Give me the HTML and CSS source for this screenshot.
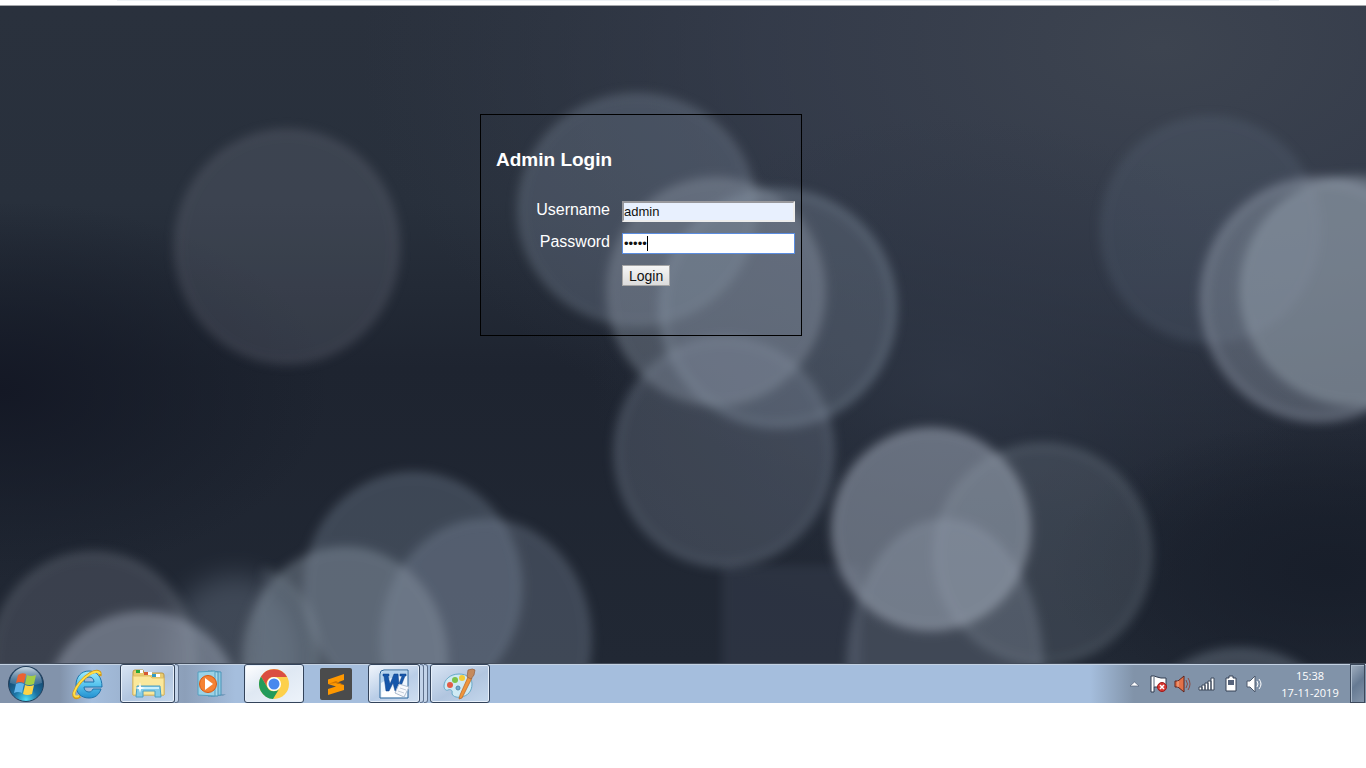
FILE: index.html
```html
<!DOCTYPE html>
<html lang="en">
<head>
<meta charset="utf-8">
<title>Admin Login</title>
<link rel="stylesheet" href="styles.css">
</head>
<body>
<div class="toolbar-edge"><div class="toolbar-line"></div></div>
<main class="wallpaper">
  <svg class="bokeh" viewBox="0 0 1366 658" preserveAspectRatio="none" aria-hidden="true">
    <defs>
      <linearGradient id="sky" x1="0" y1="0" x2="0" y2="1">
        <stop offset="0" stop-color="#2a313d"/><stop offset=".3" stop-color="#28303c"/><stop offset=".55" stop-color="#1e2430"/><stop offset="1" stop-color="#212834"/>
      </linearGradient>
      <radialGradient id="glow"><stop offset="0" stop-color="#3d4450"/><stop offset=".5" stop-color="#394050" stop-opacity=".65"/><stop offset="1" stop-color="#343b4a" stop-opacity="0"/></radialGradient>
      <radialGradient id="mid"><stop offset="0" stop-color="#2f3746" stop-opacity=".8"/><stop offset="1" stop-color="#2b3341" stop-opacity="0"/></radialGradient>
      <radialGradient id="dark"><stop offset="0" stop-color="#141825"/><stop offset="1" stop-color="#141a26" stop-opacity="0"/></radialGradient>
      <radialGradient id="shade"><stop offset="0" stop-color="#171d29" stop-opacity=".9"/><stop offset="1" stop-color="#141a26" stop-opacity="0"/></radialGradient>
      <filter id="soft" x="-20%" y="-20%" width="140%" height="140%" color-interpolation-filters="sRGB"><feGaussianBlur stdDeviation="5"/></filter>
      <filter id="softer" x="-50%" y="-50%" width="200%" height="200%" color-interpolation-filters="sRGB"><feGaussianBlur stdDeviation="14"/></filter>
    </defs>
    <rect width="1366" height="658" fill="url(#sky)"/>
    <ellipse cx="1160" cy="40" rx="800" ry="480" fill="url(#glow)"/>
    <ellipse cx="950" cy="370" rx="360" ry="260" fill="url(#mid)"/>
    <ellipse cx="0" cy="385" rx="330" ry="190" fill="url(#dark)"/>
    <ellipse cx="1330" cy="565" rx="280" ry="150" fill="url(#shade)"/>
    <rect x="722" y="560" width="140" height="110" fill="#313847" opacity=".7" filter="url(#soft)"/>
    <ellipse cx="235" cy="650" rx="68" ry="80" fill="#8795a8" opacity=".3" filter="url(#softer)"/>
    <g filter="url(#soft)" stroke-width="10">
      <ellipse cx="287" cy="241" rx="111" ry="116" fill="#8a90a0" fill-opacity=".20" stroke="#a4aab8" stroke-opacity=".07"/>
      <ellipse cx="637" cy="204" rx="118" ry="115" fill="#8998ab" fill-opacity=".28" stroke="#a4b1bf" stroke-opacity=".09"/>
      <ellipse cx="778" cy="303" rx="116" ry="117" fill="#8796aa" fill-opacity=".28" stroke="#a6b5c6" stroke-opacity=".19"/>
      <ellipse cx="716" cy="286" rx="108" ry="113" fill="#98a3b2" fill-opacity=".34" stroke="#a4b1bf" stroke-opacity=".10"/>
      <ellipse cx="724" cy="447" rx="108" ry="113" fill="#8892a5" fill-opacity=".27" stroke="#a4b1bf" stroke-opacity=".13"/>
      <ellipse cx="1043" cy="549" rx="107" ry="109" fill="#8892a2" fill-opacity=".23" stroke="#a4b1bf" stroke-opacity=".12"/>
      <ellipse cx="945" cy="665" rx="97" ry="150" fill="#929fb0" fill-opacity=".28" stroke="#a4b1bf" stroke-opacity=".08"/>
      <ellipse cx="931" cy="524" rx="98" ry="100" fill="#a5b0c0" fill-opacity=".50" stroke="#b8c2d0" stroke-opacity=".16"/>
      <ellipse cx="1210" cy="224" rx="108" ry="112" fill="#6a7c8f" fill-opacity=".19" stroke="#8799aa" stroke-opacity=".06"/>
      <ellipse cx="1319" cy="294" rx="116" ry="120" fill="#929fae" fill-opacity=".38" stroke="#aab5c4" stroke-opacity=".24"/>
      <ellipse cx="1356" cy="285" rx="115" ry="114" fill="#a1acba" fill-opacity=".40" stroke="#b0bac8" stroke-opacity=".09"/>
      <ellipse cx="413" cy="583" rx="108" ry="115" fill="#8594a8" fill-opacity=".30" stroke="#a4b1bf" stroke-opacity=".08"/>
      <ellipse cx="486" cy="635" rx="104" ry="120" fill="#8b98ab" fill-opacity=".29" stroke="#a4b1bf" stroke-opacity=".08"/>
      <ellipse cx="345" cy="655" rx="101" ry="112" fill="#929fae" fill-opacity=".37" stroke="#a4b1bf" stroke-opacity=".10"/>
      <path d="M262 567Q317 585 317 645V680H252Z" fill="#8795a8" fill-opacity=".15"/>
      <path d="M262 565Q315 585 315 650V680" fill="none" stroke="#a4b1bf" stroke-opacity=".12"/>
      <ellipse cx="93" cy="654" rx="101" ry="106" fill="#868d9c" fill-opacity=".26" stroke="#a4b1bf" stroke-opacity=".10"/>
      <ellipse cx="143" cy="696" rx="94" ry="88" fill="#9da8b8" fill-opacity=".48" stroke="#b0bac8" stroke-opacity=".13"/>
      <ellipse cx="1240" cy="715" rx="90" ry="70" fill="#8490a0" fill-opacity=".32" stroke="#a4b1bf" stroke-opacity=".13"/>
    </g>
  </svg>
  <form class="login">
    <h1 class="login-title">Admin Login</h1>
    <div class="fields">
      <label class="label" for="user">Username</label>
      <input class="field field-filled" id="user" type="text" value="admin">
      <label class="label" for="pass">Password</label>
      <div class="pass-wrap">
        <input class="field field-active" id="pass" type="password" value="admin">
        <span class="caret"></span>
      </div>
      <button class="submit" type="button">Login</button>
    </div>
  </form>
</main>
<footer class="taskbar">
  <button class="task start" aria-label="Start">
    <svg width="38" height="38" viewBox="0 0 38 38">
      <defs>
        <radialGradient id="orb" cx=".5" cy=".95" r=".85"><stop offset="0" stop-color="#4fe0f8"/><stop offset=".4" stop-color="#1b73a4"/><stop offset="1" stop-color="#143a5e"/></radialGradient>
        <linearGradient id="shine" x1="0" y1="0" x2="0" y2="1"><stop offset="0" stop-color="#dce9f3" stop-opacity=".9"/><stop offset="1" stop-color="#7da0bd" stop-opacity=".25"/></linearGradient>
      </defs>
      <circle cx="19" cy="19" r="17.5" fill="url(#orb)" stroke="#25405c"/>
      <path d="M3 18A16 16 0 0 1 35 18Q19 24 3 18Z" fill="url(#shine)"/>
      <path d="M11 10q4-3 8-1l-2 9q-4-2-8 0z" fill="#ec6231"/>
      <path d="M20 10q4 2 9 0l-2 9q-5 2-9 0z" fill="#a3ce46"/>
      <path d="M9 19q4-2 8 0l-2 9q-4-2-8 0z" fill="#62b6ec"/>
      <path d="M18 20q4 2 9 0l-2 9q-5 2-9 0z" fill="#fdd448"/>
    </svg>
  </button>
  <button class="task ie" aria-label="Internet Explorer">
    <svg width="32" height="32" viewBox="0 0 32 32">
      <defs><linearGradient id="ieb" x1="0" y1="0" x2="0" y2="1"><stop offset="0" stop-color="#a2ecfc"/><stop offset=".5" stop-color="#58c4ee"/><stop offset="1" stop-color="#2390d0"/></linearGradient></defs>
      <path fill="url(#ieb)" stroke="#1d73ab" stroke-width="1" fill-rule="evenodd" d="M17 3C9 3 4 9 4 17s5 13 13 13c6 0 10-3 12-9h-8c-1 2-2 3-4 3-3 0-5-2-5-5h18C30 9 25 3 17 3zM12 14c0-3 2-5 5-5s5 2 5 5z"/>
      <path d="M28 8c1-5-3-6-9-3C12 9 4 18 2 25c-1 5 2 6 6 3" fill="none" stroke="#d69b14" stroke-width="3"/>
      <path d="M28 6c-1-3-5-3-10 0C11 10 5 17 2 25c0 4 2 4 5 3" fill="none" stroke="#ffdf4a" stroke-width="2"/>
    </svg>
  </button>
  <button class="task open explorer" aria-label="File Explorer">
    <svg width="34" height="32" viewBox="0 0 34 32">
      <path d="M2 4q0-2 2-2h8l1 3h18q2 0 2 2v20H2z" fill="#e9cc70" stroke="#bd9846"/>
      <path d="M5 2h5v3H5z" fill="#28a838"/><path d="M13 4h5v3h-5z" fill="#d65a32"/><path d="M21 6h5v3h-5z" fill="#339cc5"/>
      <path d="M9 2h3v3H9zM17 4h4v3h-4zM25 6h4v3h-4z" fill="#fff"/>
      <path d="M2 8h17l2 2h12v17H2z" fill="#fae89c" stroke="#dfbf66"/>
      <path d="M6 18h23l1 11h-6v-6H12v6H5z" fill="#83cbe7" stroke="#4b9fc4"/>
      <path d="M7 19h21v2H7z" fill="#c9f0fb"/><path d="M9 14l1 5 4 1-4 1-1 4-1-4-4-1 4-1z" fill="#fff"/>
    </svg>
  </button>
  <span class="stack"></span>
  <button class="task player" aria-label="Media Player">
    <svg width="30" height="28" viewBox="0 0 30 28">
      <path d="M20 24h9l-3 2H4z" fill="#5f8caf" opacity=".6"/>
      <path d="M14 1l10 1v23l-10 1z" fill="#8fcbe2" stroke="#4c95b8"/><path d="M11 1l10 1v24H11z" fill="#a9daea" stroke="#4c95b8"/>
      <path d="M1 2l17-1v25l-17-1z" fill="#9bd2e6" stroke="#559fc0"/>
      <circle cx="11" cy="14" r="8.500" fill="#f58233" stroke="#d95811"/><path d="M8 8l8 6-8 6z" fill="#fff"/>
    </svg>
  </button>
  <button class="task open chrome" aria-label="Chrome">
    <svg width="30" height="30" viewBox="0 0 30 30">
      <circle cx="15" cy="15" r="15" fill="#fdd04b"/>
      <path d="M2 7.500A15 15 0 0 1 28 8H15A7 7 0 0 0 8.500 18.500Z" fill="#da4e42"/>
      <path d="M2 7.500A15 15 0 0 0 14 30L21 18.500A7 7 0 0 1 8.500 18.500Z" fill="#229b5a"/>
      <circle cx="15" cy="15" r="7" fill="#fff"/><circle cx="15" cy="15" r="5.500" fill="#4988ee"/>
    </svg>
  </button>
  <button class="task sublime" aria-label="Sublime Text">
    <svg width="32" height="32" viewBox="0 0 32 32">
      <rect width="32" height="32" rx="2" fill="#4a4b4c"/>
      <path d="M8 11.500L24 6v6l-8 3 8 2v5L8 27v-6l8-2.500L8 16z" fill="#ff9800"/><path d="M8 16l8-3 8 4-8-2z" fill="#d37700"/>
    </svg>
  </button>
  <button class="task open word" aria-label="Word">
    <svg width="30" height="30" viewBox="0 0 30 30">
      <path d="M5 1h24v28H1V5q0-4 4-4z" fill="#eef6fd" stroke="#276299"/>
      <path d="M5 2h23v5Q14 6 2 14V5q0-3 3-3z" fill="#b5d3ee"/>
      <path d="M3 23l16-6 11 2-6 9H3z" fill="#fff"/>
      <path d="M4 5h6v2H9l2 8 4-10h4l1 10 3-8h-2V5h6v2h-1l-6 15h-4l-2-8-4 8H7L5 7H4z" fill="#1657aa" stroke="#0e3f86" stroke-width=".5"/>
      <path d="M20 15l10 3-5 10-9-4z" fill="#f7f9fc" stroke="#aebcce"/><path d="M21 19l6 2M19 22l6 2" stroke="#c3ccd8"/>
    </svg>
  </button>
  <span class="stack"></span><span class="stack"></span>
  <button class="task open paint" aria-label="Paint">
    <svg width="34" height="32" viewBox="0 0 34 32">
      <path d="M16 6C7 6 1 12 1 18c0 3 2 5 4 4s5 0 4 3c0 3 4 5 9 4 7-1 11-6 11-13 0-6-5-10-13-10z" fill="#cfeaf4" stroke="#67a9c7"/>
      <circle cx="7" cy="17" r="3" fill="#e25b45"/><circle cx="12" cy="12" r="3" fill="#7cc24a"/><circle cx="19" cy="10" r="3" fill="#f4cd38"/><circle cx="15" cy="20" r="2" fill="#6fa9ce" stroke="#4d89ad"/>
      <path d="M25 9l4 1-10 20-3 1 1-4z" fill="#ef963d" stroke="#b76422" stroke-width=".7"/><path d="M25 2q5-2 7 0l-1 5-3 4-4-2z" fill="#c58a5d" stroke="#936040" stroke-width=".7"/>
    </svg>
  </button>
  <div class="tray">
    <svg class="tray-arrow" width="9" height="18" viewBox="0 0 9 18"><path d="M0 11l4.500-4L9 11z" fill="#fff" stroke="#54627a" stroke-width=".7"/></svg>
    <svg width="18" height="18" viewBox="0 0 18 18"><path d="M1 1h3l3 1 4 1h5v9H4v5H1z" fill="#fff" stroke="#2f3b4e"/><path d="M4 2v10" stroke="#59667a"/><circle cx="12" cy="12" r="4.500" fill="#d83833" stroke="#9e1a1a"/><path d="M10 10l4 4m0-4l-4 4" stroke="#fff" stroke-width="1.500"/></svg>
    <svg width="18" height="18" viewBox="0 0 18 18"><path d="M1 6h3l6-5v16l-6-5H1z" fill="#e37147" stroke="#5e251f"/><path d="M4 6v6" stroke="#f3b49a"/><path d="M12 5q3 4 0 8M14 3q4 6 0 12" fill="none" stroke="#8c4a41"/></svg>
    <svg width="18" height="18" viewBox="0 0 18 18"><path d="M1 12h3v3H1zM4 10h3v5H4zM7 8h3v7H7zM10 6h3v9h-3zM13 3h3v12h-3z" fill="#fff" stroke="#3c485a"/></svg>
    <svg width="18" height="18" viewBox="0 0 18 18"><path d="M7 1h4v2h3v13H4V3h3z" fill="#fff" stroke="#344055"/><path d="M6 5h6v5H6z" fill="#56637a"/></svg>
    <svg width="18" height="18" viewBox="0 0 18 18"><path d="M1 6h3l5-5v16l-5-5H1z" fill="#fff" stroke="#4c596c"/><path d="M11 6q2 3 0 6M13 4q4 5 0 10" fill="none" stroke="#fff"/></svg>
  </div>
  <time class="clock" datetime="2019-11-17T15:38"><span>15:38</span><span>17-11-2019</span></time>
  <button class="show-desktop" aria-label="Show desktop"></button>
</footer>
</body>
</html>
```
FILE: styles.css
```css
* { box-sizing: border-box; }
body {
  margin: 0;
  background: #fff;
  font-family: "Liberation Sans", Arial, sans-serif;
}
.toolbar-edge {
  height: 6px;
  padding: 0 87px 0 117px;
  border-bottom: 1px solid #a5a7ab;
}
.toolbar-line { height: 1px; background: #edf1f5; }
.wallpaper {
  position: relative;
  padding: 108px 0 327px 480px;
  background: #262d39;
}
.bokeh {
  position: absolute;
  inset: 0;
  width: 100%;
  height: 100%;
}
.login {
  position: relative;
  width: 322px;
  padding: 34px 6px 49px 15px;
  border: 1px solid #000;
  color: #fff;
}
.login-title {
  margin: 0 0 30px;
  font-size: 19px;
  line-height: 22px;
}
.fields {
  display: grid;
  grid-template-columns: 114px 1fr;
  column-gap: 12px;
  row-gap: 11px;
}
.label {
  font-size: 16px;
  line-height: 18px;
  text-align: right;
}
.field {
  display: block;
  width: 100%;
  height: 21px;
  padding: 1px 0;
  border: 2px solid #ededed;
  border-color: #98989c #ededed #ededed #98989c;
  font: 13px "Liberation Sans", Arial, sans-serif;
  color: #101010;
  outline: none;
}
.field-filled { background: #e8f0fe; }
.field-active {
  padding: 1px;
  border: 1px solid #5b8de0;
  background: #fff;
}
.pass-wrap { position: relative; }
.caret {
  position: absolute;
  left: 25px;
  top: 3px;
  width: 1px;
  height: 15px;
  background: #000;
}
.submit {
  grid-column: 2;
  justify-self: start;
  height: 21px;
  padding: 0 6px;
  border: 1px solid #a6a6a6;
  background: linear-gradient(#f5f5f5, #dcdcdc);
  font: 14px "Liberation Sans", Arial, sans-serif;
  color: #111;
}
.taskbar {
  display: flex;
  align-items: stretch;
  height: 40px;
  border-top: 1px solid #434d5c;
  box-shadow: inset 0 1px #c3d1e2;
  background: linear-gradient(90deg, #8293ab 0, #8293ab 60px, #a5bedd 92px, #8c9fb9 185px, #a5bedd 235px, #a5bedd calc(100% - 276px), #8193a9 calc(100% - 232px), #8193a9 100%);
}
.task {
  display: grid;
  place-items: center;
  padding: 0;
  border: 0;
  background: none;
}
.start { width: 52px; }
.ie { width: 60px; margin: 0 6px 0 6px; }
.open {
  width: 60px;
  margin-left: -4px;
  border: 1px solid #33435a;
  border-radius: 3px;
  box-shadow: inset 0 0 0 1px #e6effa;
  background: linear-gradient(150deg, #d9e5f4, #b1c5df 55%, #c4d7ec);
}
.explorer { width: 55px; }
.stack {
  width: 4px;
  border: 1px solid #5e708b;
  border-left: 0;
  border-radius: 0 3px 3px 0;
  background: #c2d3e9;
}
.player { width: 65px; }
.chrome { margin-left: 0; background: linear-gradient(150deg, #fff, #dfe8f3 45%, #edf3fa); }
.sublime { width: 64px; }
.word { width: 52px; margin-left: 0; background: linear-gradient(150deg, #f1f6fc, #b9cde7 55%, #cfdef0); }
.paint { margin-left: 2px; }
.tray {
  display: flex;
  align-items: center;
  gap: 6px;
  margin-left: auto;
}
.tray-arrow { margin-right: 5px; }
.clock {
  display: flex;
  flex-direction: column;
  justify-content: center;
  width: 60px;
  margin: 0 10px 0 16px;
  font: 11px/17px "Open Sans", "Noto Sans", sans-serif;
  color: #fff;
  text-align: center;
}
.show-desktop {
  width: 15px;
  margin-right: 1px;
  padding: 0;
  border: 1px solid #3c495c;
  box-shadow: inset 1px 1px #adbccd;
  background: linear-gradient(135deg, #a1afc0, #667a93 50%, #8495aa);
}
```
